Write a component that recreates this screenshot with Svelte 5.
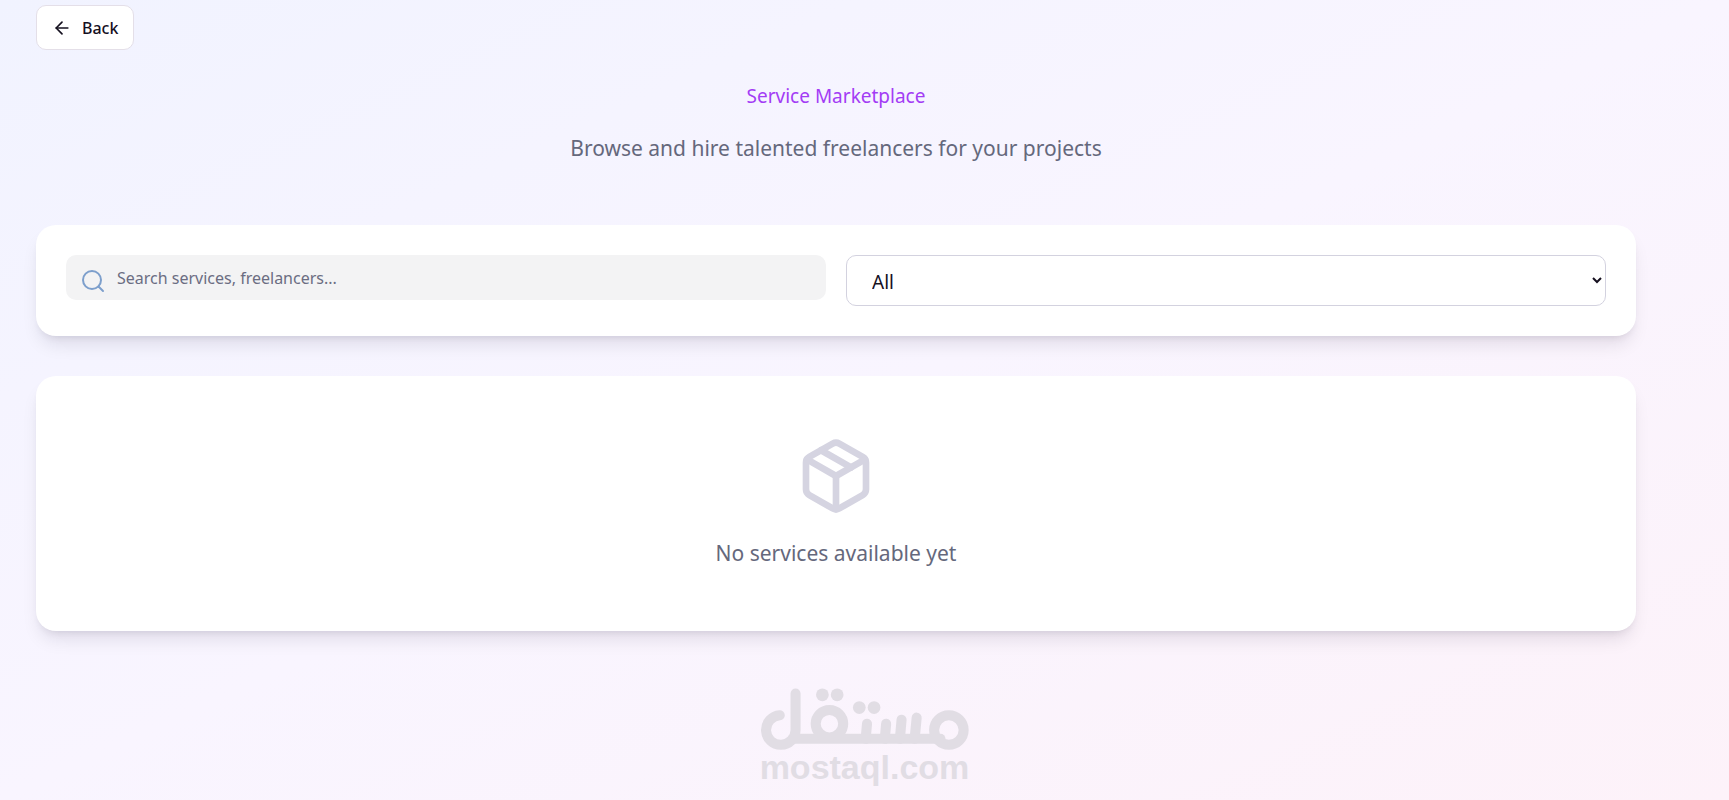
<script>
  let search = "";
  let category = "All";

  const categories = ["All", "Design", "Development", "Writing", "Marketing"];
</script>

<div class="page">
  <main class="container">
    <button class="back-btn" type="button">
      <svg class="back-icon" viewBox="0 0 24 24" aria-hidden="true">
        <path d="m12 19-7-7 7-7" />
        <path d="M19 12H5" />
      </svg>
      Back
    </button>

    <header class="heading">
      <h1>Service Marketplace</h1>
      <p>Browse and hire talented freelancers for your projects</p>
    </header>

    <section class="card filters">
      <label class="search">
        <svg class="search-icon" viewBox="0 0 24 24" aria-hidden="true">
          <circle cx="11" cy="11" r="9" />
          <path d="m22 22-4.5-4.5" />
        </svg>
        <input
          type="text"
          placeholder="Search services, freelancers..."
          aria-label="Search services"
          bind:value={search}
        />
      </label>
      <select aria-label="Category" bind:value={category}>
        {#each categories as item}
          <option value={item}>{item}</option>
        {/each}
      </select>
    </section>

    <section class="card empty">
      <svg class="empty-icon" viewBox="0 0 24 24" aria-hidden="true">
        <path d="M11 21.73a2 2 0 0 0 2 0l7-4A2 2 0 0 0 21 16V8a2 2 0 0 0-1-1.73l-7-4a2 2 0 0 0-2 0l-7 4A2 2 0 0 0 3 8v8a2 2 0 0 0 1 1.73z" />
        <path d="M12 22V12" />
        <path d="M3.29 7 12 12l8.71-5" />
        <path d="m7.5 4.27 9 5.15" />
      </svg>
      <p>No services available yet</p>
    </section>
  </main>

  <footer class="brand">
    <svg class="brand-logo" viewBox="62 50 623 190" role="img" aria-label="مستقل">
      <g class="strokes">
        <path d="M121 134A44 44 0 1 0 168 178V69" />
        <path d="M160 204H600" />
        <circle cx="269" cy="159" r="41" />
        <circle cx="625" cy="178" r="44" />
        <path d="M381 159 377 204M438 159 434 204M484 147 479 204M529 141 523 204" />
      </g>
      <circle cx="248" cy="73" r="19" />
      <circle cx="292" cy="73" r="19" />
      <circle cx="358" cy="111" r="19" />
      <circle cx="402" cy="111" r="19" />
    </svg>
    <span>mostaql.com</span>
  </footer>
</div>

<style>
  :global(body) {
    margin: 0;
  }

  .page {
    box-sizing: border-box;
    min-height: 100vh;
    padding: 5px 36px 0;
    background: linear-gradient(to bottom right, #f1f3ff, #f9f5ff 50%, #fdf2f9);
    font-family: "Segoe UI", "Noto Sans", sans-serif;
    color: #15101f;
  }

  .container {
    max-width: 1600px;
  }

  .back-btn {
    display: flex;
    align-items: center;
    gap: 10px;
    height: 45px;
    padding: 0 15px;
    border: 1px solid #e4dfe8;
    border-radius: 10px;
    background: #fff;
    color: inherit;
    font-family: inherit;
    font-size: 16px;
    font-weight: 500;
    cursor: pointer;
  }

  .back-icon {
    width: 20px;
    height: 20px;
    fill: none;
    stroke: currentColor;
    stroke-width: 2;
    stroke-linecap: round;
    stroke-linejoin: round;
  }

  .heading {
    padding: 31px 0 59px;
    text-align: center;
  }

  .heading h1 {
    margin: 0 0 20px;
    color: #a33cf5;
    font-size: 19px;
    font-weight: 400;
    line-height: 30px;
  }

  .heading p,
  .empty p {
    margin: 0;
    color: #65687c;
    font-size: 21px;
    line-height: 35px;
  }

  .card {
    border-radius: 20px;
    background: #fff;
    box-shadow:
      0 12px 18px -4px rgba(20, 10, 40, 0.1),
      0 5px 8px -5px rgba(20, 10, 40, 0.12);
  }

  .filters {
    display: grid;
    grid-template-columns: 1fr 1fr;
    align-items: start;
    gap: 20px;
    padding: 30px;
    margin-bottom: 40px;
  }

  .search {
    display: flex;
    align-items: center;
    gap: 12px;
    height: 45px;
    padding: 0 15px;
    border-radius: 10px;
    background: #f3f3f4;
  }

  .search-icon {
    flex: none;
    width: 24px;
    height: 24px;
    padding-top: 6px;
    fill: none;
    stroke: #7d9fcc;
    stroke-width: 2;
    stroke-linecap: round;
  }

  .search input {
    flex: 1;
    min-width: 0;
    padding: 0;
    border: 0;
    outline: 0;
    background: transparent;
    color: inherit;
    font-family: inherit;
    font-size: 16px;
  }

  .search input::placeholder {
    color: #6b6d82;
  }

  select {
    width: 100%;
    height: 51px;
    padding: 2px 2px 0 21px;
    border: 1px solid #d3d2df;
    border-radius: 10px;
    background: #fff;
    color: inherit;
    font-family: inherit;
    font-size: 19px;
  }

  .empty {
    display: flex;
    flex-direction: column;
    align-items: center;
    gap: 20px;
    padding: 60px;
  }

  .empty-icon {
    width: 80px;
    height: 80px;
    fill: none;
    stroke: #d5d4e1;
    stroke-width: 2;
    stroke-linecap: round;
    stroke-linejoin: round;
  }

  .brand {
    display: flex;
    flex-direction: column;
    align-items: center;
    padding-top: 56px;
    color: #e1dde4;
    font-family: "Liberation Sans", Arial, sans-serif;
    font-size: 34px;
    font-weight: 700;
    line-height: 32px;
  }

  .brand-logo {
    width: 209px;
    height: 64px;
    fill: currentColor;
  }

  .strokes {
    fill: none;
    stroke: currentColor;
    stroke-width: 30;
    stroke-linecap: round;
  }
</style>
